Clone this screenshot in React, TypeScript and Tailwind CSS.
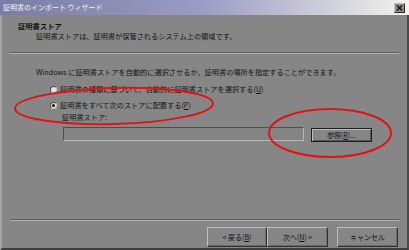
const jp = { fontFamily: '"Noto Sans CJK JP", "Noto Sans", sans-serif' };

const Radio = ({ checked }: { checked?: boolean }) => (
  <span className="flex h-[7px] w-[7px] items-center justify-center rounded-full border border-t-[#4a4a4a] border-l-[#4a4a4a] border-r-[#c8c8c8] border-b-[#c8c8c8] bg-[#e6e6e6]">
    {checked && <span className="h-[3px] w-[3px] rounded-full bg-[#111]" />}
  </span>
);

const FooterButton = ({ label, w }: { label: React.ReactNode; w: string }) => (
  <div
    className={`${w} flex h-[20px] items-center justify-center border border-t-[#bdbdbd] border-l-[#bdbdbd] border-r-[#303030] border-b-[#303030] text-[7px] leading-none text-[#111] shadow-[inset_-1px_-1px_0_#6a6a6a]`}
  >
    {label}
  </div>
);

export default function App() {
  return (
    <div
      className="relative flex h-[250px] w-[409px] flex-col overflow-hidden bg-[#868686] text-[#151515]"
      style={jp}
    >
      {/* title bar */}
      <div className="flex h-[15px] shrink-0 items-center justify-between bg-gradient-to-r from-[#7a7da3] via-[#9c9cc6] to-[#f3f3ea] pl-[3px] pr-[4px]">
        <span className="text-[7px] leading-none text-[#f4f4f4]">証明書のインポート ウィザード</span>
        <div className="flex h-[10px] w-[11px] items-center justify-center border border-t-[#c0c0c0] border-l-[#c0c0c0] border-r-[#2a2a2a] border-b-[#2a2a2a] bg-[#8c8c8c]">
          <svg width="7" height="6" viewBox="0 0 7 6">
            <path d="M1 0.5 L6 5.5 M6 0.5 L1 5.5" stroke="#111" strokeWidth="1.4" />
          </svg>
        </div>
      </div>

      {/* window body */}
      <div className="flex flex-1 flex-col border-x-2 border-b-[2px] border-l-[#a4a4a4] border-r-[#4a4a4a] border-b-[#3e3e3e]">
        <div className="ml-[16px] mt-[6px] text-[7.3px] font-bold leading-[10px]">証明書ストア</div>
        <div className="ml-[34px] text-[7.2px] leading-[10px]">
          証明書ストアは、証明書が保管されるシステム上の領域です。
        </div>
        <div className="ml-[8px] mt-[11px] h-[2px] w-[389px] border-t border-b border-t-[#5e5e5e] border-b-[#b2b2b2]" />

        <div className="ml-[34px] mt-[13px] text-[7.2px] leading-[10px]">
          Windows に証明書ストアを自動的に選択させるか、証明書の場所を指定することができます。
        </div>
        <div className="ml-[48px] mt-[7px] flex h-[10px] items-center gap-[3px] text-[7.2px] leading-[10px]">
          <Radio />
          <span>
            証明書の種類に基づいて、自動的に証明書ストアを選択する(<span className="underline">U</span>)
          </span>
        </div>
        <div className="ml-[48px] mt-[6px] flex h-[10px] items-center gap-[3px] text-[7.2px] leading-[10px]">
          <Radio checked />
          <span>
            証明書をすべて次のストアに配置する(<span className="underline">P</span>)
          </span>
        </div>
        <div className="ml-[60px] mt-[2px] text-[7.2px] leading-[10px]">証明書ストア:</div>
        <div className="ml-[61px] mt-[5px] flex items-start gap-[7px]">
          <div className="h-[14px] w-[241px] border border-t-[#4e4e4e] border-l-[#4e4e4e] border-r-[#b8b8b8] border-b-[#b8b8b8] bg-[#848484]" />
          <div className="mt-[1px] flex h-[14px] w-[61px] items-center justify-center border border-[#1e1e1e] text-[7px] leading-none shadow-[inset_1px_1px_0_#bcbcbc,inset_-1px_-1px_0_#555]">
            参照(<span className="underline">R</span>)...
          </div>
        </div>

        <div className="mt-auto">
          <div className="ml-[8px] h-[2px] w-[389px] border-t border-b border-t-[#5e5e5e] border-b-[#b2b2b2]" />
          <div className="ml-[205px] mt-[6px] flex pb-[1px]">
            <FooterButton w="w-[60px]" label={<>&lt; 戻る(<span className="underline">B</span>)</>} />
            <FooterButton w="w-[61px]" label={<>次へ(<span className="underline">N</span>) &gt;</>} />
            <div className="w-[9px]" />
            <FooterButton w="w-[61px]" label="キャンセル" />
          </div>
        </div>
      </div>

      {/* red annotation marks */}
      <svg className="pointer-events-none absolute inset-0" width="409" height="250" viewBox="0 0 409 250">
        <ellipse cx="114" cy="106" rx="99" ry="18" transform="rotate(-1.5 114 106)" fill="none" stroke="#e01414" strokeWidth="2" />
        <ellipse cx="330" cy="133" rx="61" ry="24" fill="none" stroke="#e01414" strokeWidth="2" />
      </svg>
    </div>
  );
}
